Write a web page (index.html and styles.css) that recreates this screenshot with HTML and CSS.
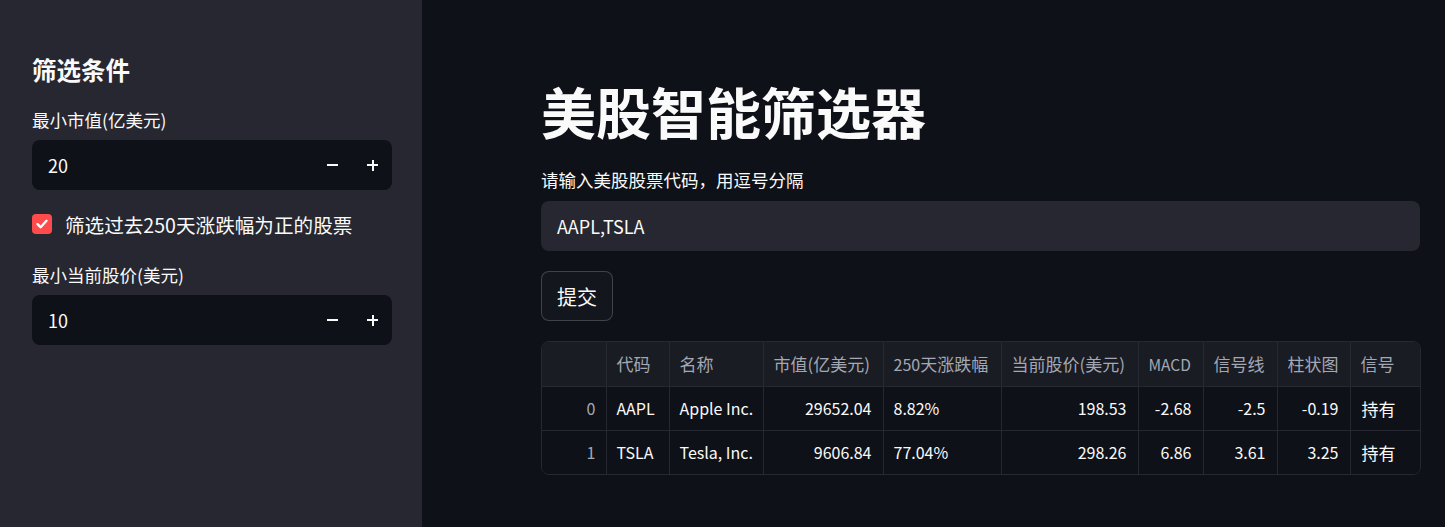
FILE: index.html
```html
<!DOCTYPE html>
<html lang="zh">
<head>
<meta charset="utf-8">
<link rel="stylesheet" href="styles.css">
</head>
<body>
<div class="app">
  <aside class="sidebar">
    <h2 class="side-title">筛选条件</h2>
    <div class="field">
      <div class="label">最小市值(亿美元)</div>
      <div class="num-input">
        <span class="num-val">20</span>
        <span class="step minus"></span>
        <span class="step plus"></span>
      </div>
    </div>
    <div class="check-row">
      <span class="checkbox">
        <svg width="14" height="14" viewBox="0 0 14 14"><path d="M2.5 7.2 L5.6 10.2 L11.5 3.8" fill="none" stroke="#fff" stroke-width="2.4" stroke-linecap="round" stroke-linejoin="round"/></svg>
      </span>
      <span class="check-label">筛选过去250天涨跌幅为正的股票</span>
    </div>
    <div class="field">
      <div class="label">最小当前股价(美元)</div>
      <div class="num-input">
        <span class="num-val">10</span>
        <span class="step minus"></span>
        <span class="step plus"></span>
      </div>
    </div>
  </aside>
  <main class="main">
    <h1 class="title">美股智能筛选器</h1>
    <div class="label main-label">请输入美股股票代码，用逗号分隔</div>
    <div class="text-input">AAPL,TSLA</div>
    <button class="btn">提交</button>
    <div class="table-wrap">
      <table class="grid">
        <colgroup>
          <col style="width:64px"><col style="width:63px"><col style="width:94px"><col style="width:120px"><col style="width:118px"><col style="width:137px"><col style="width:65px"><col style="width:74px"><col style="width:73px"><col>
        </colgroup>
        <thead>
          <tr><th></th><th>代码</th><th>名称</th><th>市值(亿美元)</th><th><span class="dig">250</span>天涨跌幅</th><th>当前股价(美元)</th><th class="sm">MACD</th><th>信号线</th><th>柱状图</th><th>信号</th></tr>
        </thead>
        <tbody>
          <tr><td class="idx">0</td><td>AAPL</td><td>Apple Inc.</td><td class="r">29652.04</td><td>8.82%</td><td class="r">198.53</td><td class="r">-2.68</td><td class="r">-2.5</td><td class="r">-0.19</td><td class="cjk">持有</td></tr>
          <tr><td class="idx">1</td><td>TSLA</td><td>Tesla, Inc.</td><td class="r">9606.84</td><td>77.04%</td><td class="r">298.26</td><td class="r">6.86</td><td class="r">3.61</td><td class="r">3.25</td><td class="cjk">持有</td></tr>
        </tbody>
      </table>
    </div>
  </main>
</div>
</body>
</html>
```
FILE: styles.css
```css
* { box-sizing: border-box; }
html, body { margin: 0; padding: 0; }
body {
  font-family: "Noto Sans CJK SC", "Noto Sans", sans-serif;
  color: #fafafa;
  background: #0e1117;
  width: 1445px;
  height: 527px;
  overflow: hidden;
}
.app { display: flex; height: 527px; }
.sidebar {
  width: 422px;
  flex: none;
  background: #262730;
  padding: 52px 30px 0 32px;
  display: flex;
  flex-direction: column;
}
.side-title {
  margin: 0;
  font-size: 24.5px;
  font-weight: 700;
  line-height: 36px;
  height: 36px;
}
.label {
  font-size: 17.5px;
  line-height: 22px;
  height: 22px;
}
.field { display: flex; flex-direction: column; }
.sidebar .field:first-of-type { margin-top: 21px; }
.field .label { margin-bottom: 9px; }
.num-input {
  height: 50px;
  background: #0e1117;
  border-radius: 8px;
  display: flex;
  align-items: center;
  padding-left: 16px;
  font-size: 18px;
}
.num-val { flex: 1; }
.step {
  width: 40px;
  height: 50px;
  position: relative;
}
.step::before, .plus::after {
  content: "";
  position: absolute;
  background: #fafafa;
  left: 15px;
  top: 24px;
  width: 11px;
  height: 2px;
}
.plus::after {
  left: 19.5px;
  top: 19.5px;
  width: 2px;
  height: 11px;
}
.check-row {
  display: flex;
  align-items: center;
  margin-top: 22px;
  height: 24px;
}
.checkbox {
  width: 20px;
  height: 20px;
  border-radius: 4px;
  background: #ff4b4b;
  display: flex;
  align-items: center;
  justify-content: center;
}
.check-label {
  margin-left: 13px;
  font-size: 19.6px;
}
.check-row + .field { margin-top: 28px; }

.main {
  flex: 1;
  padding: 72px 25px 0 119px;
  display: flex;
  flex-direction: column;
  align-items: flex-start;
}
.title {
  margin: 0;
  font-size: 55px;
  font-weight: 700;
  line-height: 76px;
  height: 76px;
}
.main-label { margin-top: 21px; }
.text-input {
  margin-top: 10px;
  width: 879px;
  height: 50px;
  background: #262730;
  border-radius: 8px;
  font-size: 18px;
  line-height: 50px;
  padding-left: 16px;
}
.btn {
  margin-top: 20px;
  height: 50px;
  width: 72px;
  border: 1px solid rgba(250,250,250,0.2);
  border-radius: 8px;
  background: #13161d;
  color: #fafafa;
  font-family: inherit;
  font-size: 20px;
  padding: 0;
}
.table-wrap {
  margin-top: 20px;
  width: 880px;
  border: 1px solid #262932;
  border-radius: 8px;
  overflow: hidden;
}
.grid {
  width: 100%;
  border-collapse: collapse;
  table-layout: fixed;
  font-size: 16px;
}
.grid th, .grid td {
  height: 44px;
  padding: 0 10px;
  border-right: 1px solid #262932;
  border-bottom: 1px solid #262932;
  white-space: nowrap;
  overflow: hidden;
  text-align: left;
}
.grid th:last-child, .grid td:last-child { border-right: none; }
.grid tbody tr:last-child td { border-bottom: none; }
.grid th {
  background: #1a1c23;
  color: #a3a8b4;
  font-weight: 400;
  font-size: 17px;
}
.grid th .dig { font-size: 16px; }
.grid th.sm { font-size: 15.5px; }
.grid td { background: #0e1117; color: #fafafa; }
.grid td.r { text-align: right; padding-right: 11px; }
.grid td.idx { text-align: right; color: #a3a8b4; }
.grid td.cjk { font-size: 17px; padding-left: 11px; }
```
